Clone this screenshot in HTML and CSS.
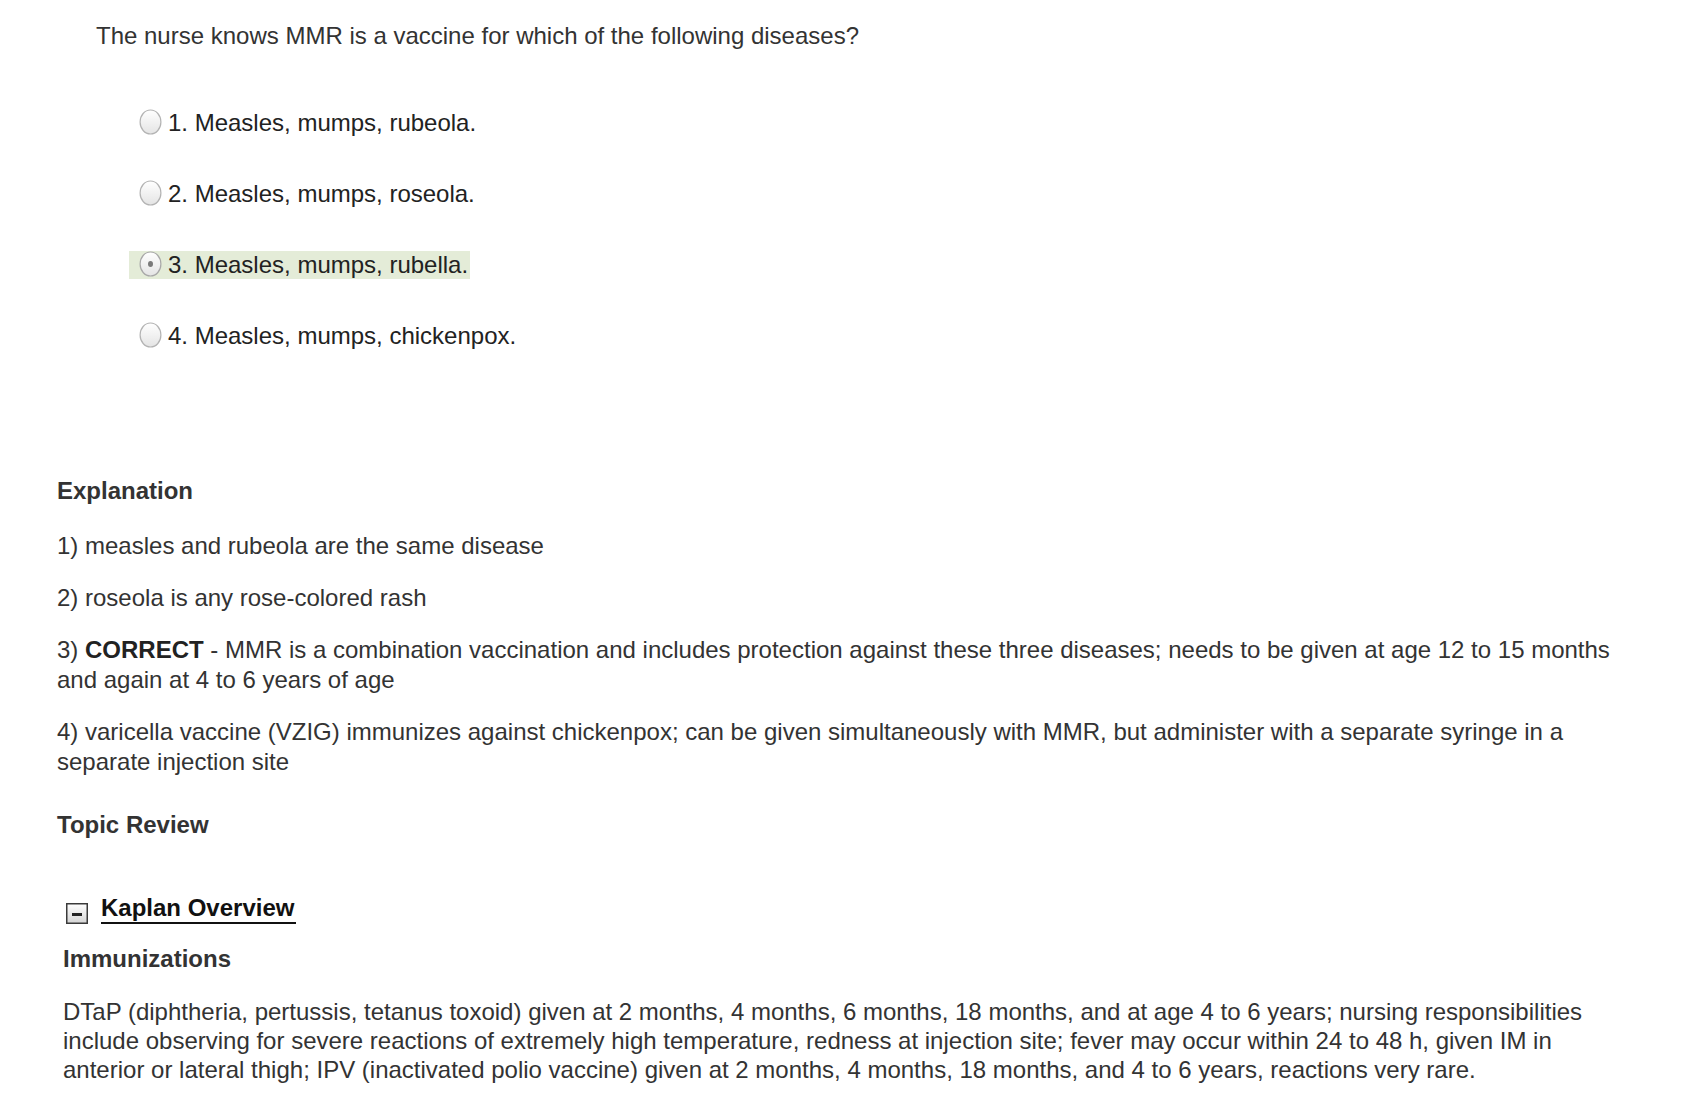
FILE: index.html
```html
<!DOCTYPE html>
<html lang="en">
<head>
<meta charset="utf-8">
<title>Question Review</title>
<link rel="stylesheet" href="styles.css">
</head>
<body>
<div class="page">
  <p class="question">The nurse knows MMR is a vaccine for which of the following diseases?</p>

  <ul class="options">
    <li class="option">
      <svg class="radio" width="23" height="26" viewBox="0 0 23 26"><defs><linearGradient id="rg" x1="0" y1="0" x2="0" y2="1"><stop offset="0" stop-color="#ffffff"/><stop offset="1" stop-color="#e4e4e4"/></linearGradient></defs><ellipse cx="11.5" cy="13" rx="10.4" ry="12" fill="url(#rg)" stroke="#b3b3b3" stroke-width="1.2"/></svg>
      <span>1. Measles, mumps, rubeola.</span>
    </li>
    <li class="option">
      <svg class="radio" width="23" height="26" viewBox="0 0 23 26"><ellipse cx="11.5" cy="13" rx="10.4" ry="12" fill="url(#rg)" stroke="#b3b3b3" stroke-width="1.2"/></svg>
      <span>2. Measles, mumps, roseola.</span>
    </li>
    <li class="option selected">
      <svg class="radio" width="23" height="26" viewBox="0 0 23 26"><ellipse cx="11.5" cy="13" rx="10.4" ry="12" fill="url(#rg)" stroke="#a8a8a8" stroke-width="1.2"/><ellipse cx="11.5" cy="13" rx="2.5" ry="2.9" fill="#7a7a7a"/></svg>
      <span>3. Measles, mumps, rubella.</span>
    </li>
    <li class="option">
      <svg class="radio" width="23" height="26" viewBox="0 0 23 26"><ellipse cx="11.5" cy="13" rx="10.4" ry="12" fill="url(#rg)" stroke="#b3b3b3" stroke-width="1.2"/></svg>
      <span>4. Measles, mumps, chickenpox.</span>
    </li>
  </ul>

  <h3 class="heading explanation-title">Explanation</h3>
  <p class="expl first">1) measles and rubeola are the same disease</p>
  <p class="expl">2) roseola is any rose-colored rash</p>
  <p class="expl"><span>3) </span><strong>CORRECT</strong><span> - MMR is a combination vaccination and includes protection against these three diseases; needs to be given at age 12 to 15 months and again at 4 to 6 years of age</span></p>
  <p class="expl">4) varicella vaccine (VZIG) immunizes against chickenpox; can be given simultaneously with MMR, but administer with a separate syringe in a separate injection site</p>

  <h3 class="heading topic-title">Topic Review</h3>

  <div class="kaplan">
    <div class="kaplan-head">
      <svg class="toggle" width="22" height="21" viewBox="0 0 22 21"><defs><linearGradient id="tg" x1="0" y1="0" x2="0" y2="1"><stop offset="0" stop-color="#ffffff"/><stop offset="1" stop-color="#d4d4d4"/></linearGradient></defs><rect x="0.75" y="0.75" width="20.5" height="19.5" fill="url(#tg)" stroke="#3a3a3a" stroke-width="1.5"/><rect x="6" y="10" width="10" height="3" fill="#222"/></svg>
      <span class="kaplan-link">Kaplan Overview</span>
    </div>
    <h4 class="sub-title">Immunizations</h4>
    <p class="body-text">DTaP (diphtheria, pertussis, tetanus toxoid) given at 2 months, 4 months, 6 months, 18 months, and at age 4 to 6 years; nursing responsibilities include observing for severe reactions of extremely high temperature, redness at injection site; fever may occur within 24 to 48 h, given IM in anterior or lateral thigh; IPV (inactivated polio vaccine) given at 2 months, 4 months, 18 months, and 4 to 6 years, reactions very rare.</p>
  </div>
</div>
</body>
</html>
```

FILE: styles.css
```css
html, body {
  margin: 0;
  padding: 0;
  background: #ffffff;
}

body {
  font-family: "Liberation Sans", Arial, Helvetica, sans-serif;
  font-size: 24px;
  line-height: 30px;
  color: #333333;
}

.page {
  padding: 21px 55px 0 57px;
}

.question {
  margin: 0 0 0 39px;
  color: #333333;
}

.options {
  list-style: none;
  margin: 58px 0 0 72px;
  padding: 0;
  display: flex;
  flex-direction: column;
  align-items: flex-start;
  gap: 43px;
}

.option {
  display: flex;
  align-items: center;
  height: 28px;
  line-height: 28px;
  padding: 0 2px 0 10px;
  color: #222222;
}

.option.selected {
  background: #e4ecd8;
}

.radio {
  display: block;
  flex: none;
  margin-right: 6px;
  margin-top: -3px;
}

.heading {
  margin: 0;
  font-size: 24px;
  line-height: 30px;
  font-weight: bold;
  color: #333333;
}

.explanation-title {
  margin-top: 126px;
}

.expl {
  margin: 22px 0 0 0;
}

.expl.first {
  margin-top: 25px;
}

.expl strong {
  color: #222222;
}

.topic-title {
  margin-top: 33px;
}

.kaplan {
  margin-top: 54px;
  padding-left: 6px;
}

.kaplan-head {
  display: flex;
  align-items: flex-start;
}

.toggle {
  display: block;
  flex: none;
  margin: 9px 13px 0 3px;
}

.kaplan-link {
  display: inline-block;
  line-height: 28px;
  font-weight: bold;
  color: #111111;
  border-bottom: 2px solid #111111;
  padding-right: 2px;
}

.sub-title {
  margin: 20px 0 0 0;
  font-size: 24px;
  line-height: 30px;
  font-weight: bold;
  color: #333333;
}

.body-text {
  margin: 23px 0 0 0;
  line-height: 29px;
  color: #333333;
}
```
